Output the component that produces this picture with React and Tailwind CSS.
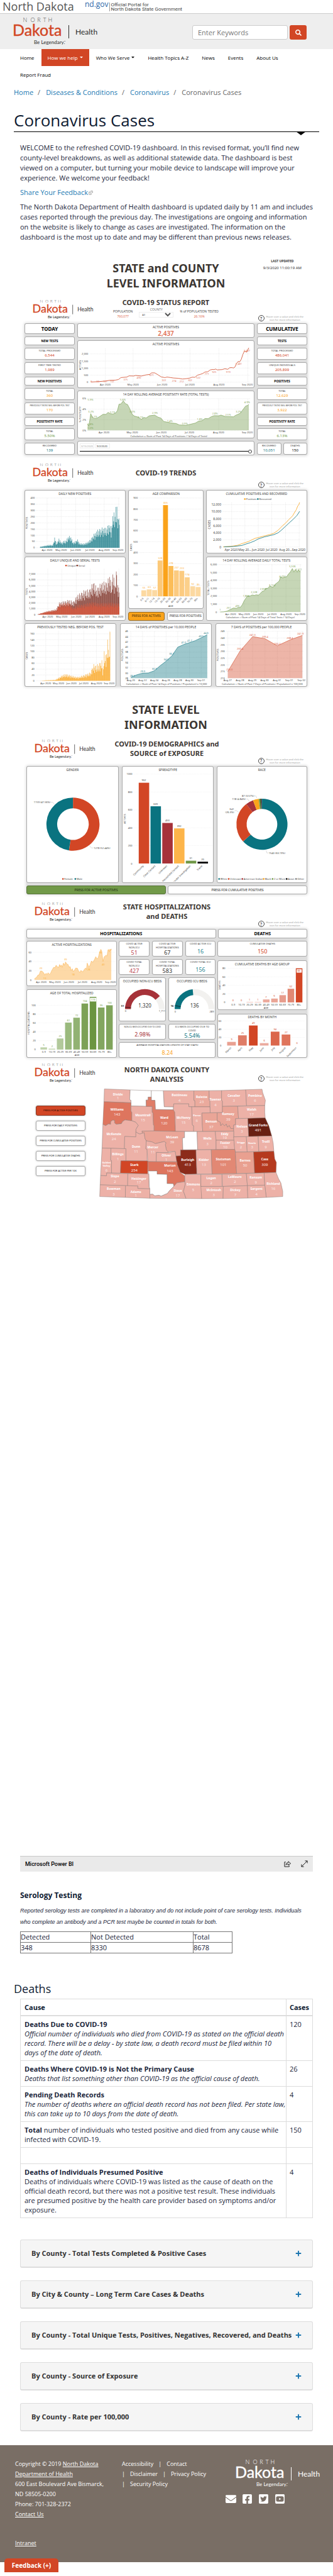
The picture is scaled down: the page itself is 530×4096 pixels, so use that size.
import React from "react";
import { FaEnvelope, FaFacebookSquare, FaTwitterSquare, FaYoutubeSquare, FaSearch, FaPlus } from "react-icons/fa";

/* Charts are plotted on a shared grid; KX and KY turn grid steps into pixels. */
const KX = 0.338;
const KY = 0.2251;
const FONT = "'Noto Sans', sans-serif";

const RED = "#d24625";
const TEAL = "#0a7380";
const GOLD = "#faa31b";
const GREEN = "#719948";
const MAROON = "#a63239";

const OriginContext = React.createContext([0, 0]);

function Chart({ x, y, w, h, title, children, titleY = 25 }) {
  const vw = Math.round(w * KX);
  const vh = Math.round(h * KY);
  return (
    <svg viewBox={`0 0 ${vw} ${vh}`} className="block w-full" role="img" aria-label={title || "chart"}>
      <OriginContext.Provider value={[x, y]}>
        {title && (
          <text x={vw / 2} y={titleY * KY + 2} fontSize="5" textAnchor="middle" fill="#3a3a3a" fontFamily={FONT}>
            {title}
          </text>
        )}
        {children}
      </OriginContext.Provider>
    </svg>
  );
}

function G({ children }) {
  const [x, y] = React.useContext(OriginContext);
  return <g transform={`scale(${KX} ${KY}) translate(${-x} ${-y})`}>{children}</g>;
}

function T({ x, y, s = 4, a = "middle", f = "#444", r = 0, b, children }) {
  const [ox, oy] = React.useContext(OriginContext);
  const px = (x - ox) * KX;
  const py = (y - oy) * KY;
  return (
    <text
      x={px}
      y={py + s * 0.36}
      fontSize={s}
      textAnchor={a}
      fill={f}
      fontWeight={b ? 700 : 400}
      fontFamily={FONT}
      transform={r ? `rotate(${r} ${px} ${py})` : undefined}
    >
      {children}
    </text>
  );
}

function Labels({ items, ...rest }) {
  return items.map(([x, y, t], i) => (
    <T key={i} x={x} y={y} {...rest}>
      {t}
    </T>
  ));
}

function Grid({ x0, x1, y0, y1, ys = [], xs = [], color = "#cfcfcf" }) {
  const p = { stroke: color, strokeWidth: 0.5, strokeDasharray: "0.7 1", vectorEffect: "non-scaling-stroke" };
  return (
    <G>
      {ys.map((y) => (
        <line key={"h" + y} x1={x0} x2={x1} y1={y} y2={y} {...p} />
      ))}
      {xs.map((x) => (
        <line key={"v" + x} x1={x} x2={x} y1={y0} y2={y1} {...p} />
      ))}
    </G>
  );
}

function Line({ pts, color, w = 0.8 }) {
  return (
    <G>
      <polyline points={pts} fill="none" stroke={color} strokeWidth={w} vectorEffect="non-scaling-stroke" />
    </G>
  );
}

function Area({ pts, base, color, opacity = 0.4 }) {
  const list = pts.split(" ");
  const first = list[0].split(",")[0];
  const last = list[list.length - 1].split(",")[0];
  return (
    <G>
      <polygon points={`${first},${base} ${pts} ${last},${base}`} fill={color} opacity={opacity} />
      <polyline points={pts} fill="none" stroke={color} strokeWidth="0.6" vectorEffect="non-scaling-stroke" />
    </G>
  );
}

const NOISE = [0.7, 1, 0.55, 0.85, 0.62, 0.95, 0.5, 0.9, 0.74, 0.6, 1, 0.8, 0.48, 0.92, 0.68, 0.97, 0.58];

function barPath(env, base, step = 2.25, flat = 0) {
  let d = "";
  let k = 0;
  for (let x = env[0][0]; x <= env[env.length - 1][0]; x += step) {
    let i = 0;
    while (i < env.length - 2 && env[i + 1][0] < x) i++;
    const [xa, ha] = env[i];
    const [xb, hb] = env[i + 1];
    const h = (ha + ((hb - ha) * (x - xa)) / (xb - xa)) * (flat + (1 - flat) * NOISE[k % NOISE.length]);
    k++;
    d += `M${x.toFixed(1)} ${base}V${(base - h).toFixed(1)}h1.9V${base}Z`;
  }
  return d;
}

function Bars({ env, base, color, flat, opacity = 0.85 }) {
  return (
    <G>
      <path d={barPath(env, base, 2.25, flat)} fill={color} opacity={opacity} />
    </G>
  );
}

function ring(cx, cy, r0, r1, a0, a1) {
  const p = (r, a) => `${(cx + r * Math.sin(a)).toFixed(2)} ${(cy - r * Math.cos(a)).toFixed(2)}`;
  const big = a1 - a0 > Math.PI ? 1 : 0;
  return `M${p(r1, a0)}A${r1} ${r1} 0 ${big} 1 ${p(r1, a1)}L${p(r0, a1)}A${r0} ${r0} 0 ${big} 0 ${p(r0, a0)}Z`;
}

function Donut({ cx, cy, r0, r1, parts }) {
  const [ox, oy] = React.useContext(OriginContext);
  const total = parts.reduce((s, p) => s + p[0], 0);
  let a = 0;
  return parts.map(([v, c], i) => {
    const from = a;
    a += (v / total) * Math.PI * 2;
    return <path key={i} d={ring((cx - ox) * KX, (cy - oy) * KY, r0, r1, from, a)} fill={c} />;
  });
}

function Dot({ x, y, c }) {
  const [ox, oy] = React.useContext(OriginContext);
  return <circle cx={(x - ox) * KX} cy={(y - oy) * KY} r="1.3" fill={c} />;
}

function Card({ className = "", children }) {
  return (
    <div className={`min-w-0 overflow-hidden rounded-[3px] bg-white shadow-[inset_0_0_0_1px_#a9a9a9] ${className}`}>{children}</div>
  );
}

/* Soft grey halo behind a group of cards */
const HALO = "rounded-[3px] bg-[#dedede] shadow-[0_0_4px_1px_#dedede]";

function Stat({ label, value, color, small }) {
  return (
    <Card className="h-[19px] pt-[2px] text-center">
      <p className={`whitespace-nowrap leading-[6px] text-[#444] ${small ? "text-[3px]" : "text-[4px]"}`}>{label}</p>
      <p className={`text-[6px] leading-[9px] ${color}`}>{value}</p>
    </Card>
  );
}

function Head({ children, big }) {
  return (
    <Card className={`flex items-center justify-center font-bold text-black ${big ? "h-[17px] text-[8px]" : "h-[14px] text-[5px]"}`}>
      {children}
    </Card>
  );
}

function Tile({ label, value, color, tall }) {
  return (
    <Card className="flex h-[25px] flex-col items-center justify-between pt-[2px] pb-[1px] text-center">
      <p className="text-[4px] leading-[6px] text-[#444]">{label}</p>
      <p className={`text-[9px] ${tall ? "leading-[14px]" : "leading-[10px]"} ${color}`}>{value}</p>
    </Card>
  );
}

function Logo({ className, white }) {
  const dark = white ? "#ffffff" : "#2b2b2b";
  return (
    <svg viewBox="0 0 131 44" className={`overflow-visible ${className}`} role="img" aria-label="North Dakota Health, Be Legendary" fontFamily="Lato, sans-serif">
      {["N", "O", "R", "T", "H"].map((c, i) => (
        <text key={i} x={[18, 30, 40, 49, 58][i]} y="7" fontSize="9" textAnchor="middle" fontWeight="300" fill={white ? "#fff" : "#555"}>
          {c}
        </text>
      ))}
      <text x="-2" y="29" fontSize="25" fill={white ? "#fff" : "#d24625"} stroke={white ? "#fff" : "#d24625"} strokeWidth="0.4">
        Dakota
      </text>
      <rect x="87" y="12" width="1" height="21" fill={dark} />
      <text x="98" y="27" fontSize="12" fill={dark}>
        Health
      </text>
      <text x="32" y="42" fontSize="8" fill={dark}>
        Be Legendary.
      </text>
      <text x="80" y="39" fontSize="3" fill={dark}>
        ™
      </text>
    </svg>
  );
}

function Help() {
  return (
    <div className="flex items-center gap-[3px] pr-[6px] pb-[3px]">
      <span className="flex size-[10px] items-center justify-center rounded-full border border-[#444] text-[7px] leading-none text-black">?</span>
      <p className="text-center text-[4px] leading-[5px] text-[#999]">
        Hover over a value and click the
        <br />
        icon for more information
      </p>
    </div>
  );
}

function PageHead({ className, titleClass = "", children }) {
  return (
    <div className={`grid grid-cols-[minmax(0,1fr)_auto_minmax(0,1fr)] ${className}`}>
      <Logo className="ml-[14px] w-[94px]" />
      <div className={`text-center text-[11px] leading-[15px] font-bold text-[#3b3632] ${titleClass}`}>{children}</div>
      <div className="flex items-end justify-end">
        <Help />
      </div>
    </div>
  );
}

const MONTHS = ["Apr 2020", "May 2020", "Jun 2020", "Jul 2020", "Aug 2020", "Sep 2020"];
const months = (xs, y, names = MONTHS) => xs.map((x, i) => [x, y, names[i]]);

function StatusReport() {
  return (
    <div className={`grid grid-cols-[80px_minmax(0,1fr)_80px] gap-1 ${HALO}`}>
      <div className="flex flex-col gap-1">
        <Head big>TODAY</Head>
        <Head>NEW TESTS</Head>
        <Stat label="TOTAL PROCESSED" value="6,544" color="text-[#d24625]" />
        <Stat label="FIRST TIME TESTED" value="1,989" color="text-[#d24625]" />
        <Head>NEW POSITIVES</Head>
        <Stat label="TOTAL" value="360" color="text-[#faa31b]" />
        <Stat small label="PREVIOUSLY TESTED NEG. BEFORE POS. TEST" value="170" color="text-[#faa31b]" />
        <Head>POSITIVITY RATE</Head>
        <Stat label="TOTAL" value="5.50%" color="text-[#719948]" />
        <Stat label="RECOVERED" value="139" color="text-[#0a7380]" />
      </div>
      <div className="flex min-w-0 flex-col gap-1">
        <Card className="h-[23px] pt-[2px] text-center">
          <p className="text-[5px] leading-[8px] text-[#3a3a3a]">ACTIVE POSITIVES</p>
          <p className="text-[10px] leading-[12px] font-semibold text-[#e06c50]">2,437</p>
        </Card>
        <Card>
          <Chart x={368} y={615} w={829} h={334} title="ACTIVE POSITIVES">
            <Grid x0={428} x1={1176} y0={672} y1={909} ys={[711, 761, 810, 860, 909]} xs={[499, 629, 765, 895, 1030, 1165]} />
            <Labels a="end" items={[[419, 711, "2,000"], [419, 761, "1,500"], [419, 810, "1,000"], [419, 860, "500"], [419, 909, "0"]]} />
            <Labels items={months([499, 629, 765, 895, 1030, 1163], 925)} />
            <T x={380} y={789} r={-90}>ACTIVES</T>
            <Line
              color={RED}
              pts="432,908 470,905 500,901 520,896 545,895 560,891 572,877 600,873 610,865 632,866 640,862 668,866 690,858 706,855 715,844 730,844 745,857 760,872 778,877 788,873 805,877 818,880 840,882 860,887 880,884 895,880 905,874 918,875 930,860 942,855 955,848 965,838 978,836 990,823 1000,820 1008,821 1015,817 1022,823 1045,821 1058,815 1072,819 1080,808 1092,807 1098,810 1105,803 1112,780 1120,764 1127,767 1135,748 1142,715 1150,690 1160,699 1170,668"
            />
            <Labels
              f="#e0705a"
              items={[[434, 906, "6"], [464, 906, "30"], [499, 906, "101"], [530, 906, "132"], [594, 891, "375"], [656, 879, "490"], [716, 861, "671"], [773, 897, "322"], [821, 900, "274"], [856, 906, "212"], [895, 897, "302"], [934, 876, "522"], [974, 852, "771"], [1008, 836, "925"], [1074, 836, "919"], [1123, 780, "1,481"], [1161, 687, "2,437"]]}
            />
          </Chart>
        </Card>
        <Card>
          <Chart x={368} y={966} w={829} h={337} title="14 DAY ROLLING AVERAGE POSITIVITY RATE (TOTAL TESTS)">
            <Grid x0={415} x1={1176} y0={1023} y1={1245} ys={[1023, 1097, 1171, 1245]} xs={[493, 625, 761, 893, 1029, 1165]} />
            <Labels a="end" items={[[409, 1023, "6%"], [409, 1097, "4%"], [409, 1171, "2%"], [409, 1245, "0%"]]} />
            <Labels items={months([493, 625, 761, 893, 1029, 1163], 1260)} />
            <T x={380} y={1133} r={-90}>% POSITIVITY</T>
            <Area
              color={GREEN}
              base={1245}
              pts="416,1200 422,1216 431,1128 436,1148 445,1162 460,1160 475,1146 488,1133 502,1133 512,1119 522,1128 535,1131 548,1123 556,1105 563,1062 572,1060 583,1038 593,1058 603,1064 612,1090 625,1133 635,1145 655,1153 667,1168 680,1155 690,1158 705,1143 730,1138 745,1152 760,1160 772,1183 790,1188 805,1193 830,1197 845,1207 875,1210 895,1203 920,1194 935,1181 952,1177 965,1162 980,1163 995,1149 1008,1142 1030,1143 1040,1138 1060,1148 1098,1150 1108,1140 1120,1132 1130,1125 1140,1105 1155,1075 1165,1070 1170,1062"
            />
            <Labels
              f="#7fa558"
              items={[[430, 1032, "5.9%"], [432, 1113, "3.2%"], [448, 1150, "2.2%"], [430, 1203, "0.8%"], [430, 1230, "0.0%"], [533, 1119, "3.1%"], [581, 1031, "5.6%"], [625, 1116, "3.0%"], [664, 1155, "2.1%"], [731, 1125, "2.9%"], [801, 1179, "1.4%"], [871, 1197, "0.9%"], [941, 1165, "1.8%"], [1012, 1128, "2.8%"], [1073, 1136, "2.5%"], [1122, 1112, "3.2%"], [1162, 1047, "4.9%"]]}
            />
            <T x={796} y={1284}>Calculation = (Sum of Past 14 Days of Positives / 14 Days of Tests)</T>
          </Chart>
        </Card>
        <Card className="h-[23px] px-1 pt-[4px]">
          <div className="flex gap-[2px]">
            <input aria-label="From date" defaultValue="3/15/2020" className="h-[8px] w-[23px] border border-[#eee] px-[1px] text-[4px] text-[#aaa]" />
            <input aria-label="To date" defaultValue="9/2/2020" className="h-[8px] w-[23px] border border-[#eee] px-[1px] text-[4px] text-[#333]" />
          </div>
          <input
            type="range"
            aria-label="Date range"
            defaultValue={100}
            className="mt-[1px] block h-[7px] w-full appearance-none bg-[linear-gradient(black,black)] bg-[length:100%_1px] bg-center bg-no-repeat [&::-webkit-slider-thumb]:size-[6px] [&::-webkit-slider-thumb]:appearance-none [&::-webkit-slider-thumb]:rounded-full [&::-webkit-slider-thumb]:border [&::-webkit-slider-thumb]:border-[#444] [&::-webkit-slider-thumb]:bg-white"
          />
        </Card>
      </div>
      <div className="flex flex-col gap-1">
        <Head big>CUMULATIVE</Head>
        <Head>TESTS</Head>
        <Stat label="TOTAL PROCESSED" value="486,041" color="text-[#d24625]" />
        <Stat label="UNIQUE INDIVIDUALS" value="205,899" color="text-[#d24625]" />
        <Head>POSITIVES</Head>
        <Stat label="TOTAL" value="12,629" color="text-[#faa31b]" />
        <Stat small label="PREVIOUSLY TESTED NEG. BEFORE POS. TEST" value="3,922" color="text-[#faa31b]" />
        <Head>POSITIVITY RATE</Head>
        <Stat label="TOTAL" value="6.13%" color="text-[#719948]" />
        <div className="grid grid-cols-2 gap-[3px]">
          <Stat label="RECOVERED" value="10,051" color="text-[#0a7380]" />
          <Stat label="DEATHS" value="150" color="text-black" />
        </div>
      </div>
    </div>
  );
}

const AGE_BARS = [
  [55, "0-5", "#fcd9a1"], [63, "6-11", "#fcd9a1"], [57, "12-14", "#fcd9a1"], [328, "15-19", "#fcc979"], [835, "20-29", GOLD], [278, "30-39", "#fcbd57"],
  [237, "40-49", "#fccb80"], [233, "50-59", "#fccb80"], [174, "60-69", "#fcd08b"], [92, "70-79", "#fcd9a1"], [85, "80+", "#fcd9a1"],
];

function Trends() {
  return (
    <div className={`flex flex-col gap-1 ${HALO}`}>
      <div className="grid grid-cols-[minmax(0,474fr)_minmax(0,357fr)_minmax(0,474fr)] gap-1">
        <div className="flex flex-col gap-[5px]">
          <Card>
            <Chart x={117} y={104} w={474} h={448} title="DAILY NEW POSITIVES">
              <Grid x0={170} x1={564} y0={161} y1={511} ys={[161, 205, 249, 292, 336, 380, 423, 467, 511]} xs={[223, 289, 357, 422, 491, 559]} />
              <Labels a="end" items={[400, 350, 300, 250, 200, 150, 100, 50, 0].map((v, i) => [165, 161 + i * 43.7, v])} />
              <Labels items={months([223, 289, 357, 424, 491, 556], 525)} />
              <T x={128} y={338} r={-90}>POSITIVES</T>
              <Bars color={TEAL} base={511} flat={0.1} env={[[190, 8], [210, 14], [235, 22], [250, 20], [257, 80], [265, 30], [278, 68], [290, 35], [300, 50], [310, 50], [320, 80], [332, 85], [345, 38], [365, 60], [375, 32], [400, 32], [420, 50], [440, 95], [465, 135], [485, 145], [500, 140], [515, 185], [522, 120], [532, 260], [540, 240], [549, 340], [556, 180], [562, 320]]} />
            </Chart>
          </Card>
          <Card>
            <Chart x={117} y={573} w={474} h={448} title="DAILY UNIQUE AND SERIAL TESTS">
              <Dot x={312} y={636} c={RED} />
              <T x={318} y={636} a="start">Unique</T>
              <Dot x={364} y={636} c="#7a2c20" />
              <T x={370} y={636} a="start">Serial</T>
              <Grid x0={176} x1={564} y0={660} y1={981} ys={[696, 737, 778, 818, 859, 900, 940, 981]} xs={[226, 292, 360, 425, 491, 560]} />
              <Labels a="end" items={["7,000", "6,000", "5,000", "4,000", "3,000", "2,000", "1,000", "0"].map((v, i) => [168, 696 + i * 40.7, v])} />
              <Labels items={months([226, 292, 360, 425, 491, 556], 996)} />
              <T x={128} y={820} r={-90}>TESTS</T>
              <Bars color="#7a2c20" base={981} flat={0.2} opacity={0.9} env={[[180, 2], [198, 12], [225, 25], [265, 38], [278, 85], [300, 95], [322, 105], [345, 95], [365, 140], [392, 170], [420, 180], [440, 235], [455, 190], [475, 225], [505, 240], [516, 285], [525, 200], [531, 320], [540, 220], [549, 330], [556, 160], [562, 265]]} />
              <Bars color="#e0583c" base={981} flat={0.2} opacity={0.85} env={[[180, 2], [198, 12], [225, 25], [265, 34], [278, 75], [300, 80], [322, 88], [345, 50], [365, 68], [400, 75], [430, 90], [470, 82], [520, 85], [562, 80]]} />
            </Chart>
          </Card>
        </div>
        <div className="flex flex-col justify-between">
          <Card>
            <Chart x={603} y={104} w={357} h={839} title="AGE COMPARISON">
              <Grid x0={655} x1={952} y0={161} y1={856} ys={[161, 239, 316, 393, 470, 547, 625, 702, 779, 856]} />
              <Labels a="end" items={[900, 800, 700, 600, 500, 400, 300, 200, 100, 0].map((v, i) => [648, 161 + i * 77.2, v])} />
              <T x={616} y={510} r={-90}>CASES</T>
              <G>
                {AGE_BARS.map(([v, , c], i) => (
                  <rect key={i} x={665 + i * 25.6} width="23" y={856 - v * 0.772} height={v * 0.772} fill={c} />
                ))}
              </G>
              <Labels f="#fbb03b" items={AGE_BARS.map(([v], i) => [677 + i * 25.6, 838 - v * 0.772, v])} />
              {AGE_BARS.map(([, n], i) => (
                <T key={n} x={674 + i * 25.6} y={868} a="end" r={-45}>
                  {n}
                </T>
              ))}
              <T x={804} y={924}>AGE</T>
            </Chart>
          </Card>
          <div className="grid grid-cols-2 gap-1">
            <button className="h-[14px] rounded-[3px] border border-[#9a6a1e] bg-[#faa31b] text-[5px] whitespace-nowrap text-[#3a2a10]">PRESS FOR ACTIVES</button>
            <button className="h-[14px] rounded-[3px] border border-[#a9a9a9] bg-white text-[5px] whitespace-nowrap text-[#333]">PRESS FOR POSITIVES</button>
          </div>
        </div>
        <div className="flex flex-col gap-[5px]">
          <Card>
            <Chart x={972} y={104} w={474} h={448} title="CUMULATIVE POSITIVES AND RECOVERED">
              <Dot x={1154} y={168} c={GOLD} />
              <T x={1160} y={168} a="start">Positives</T>
              <Dot x={1215} y={168} c={TEAL} />
              <T x={1221} y={168} a="start">Recovered</T>
              <Grid x0={1050} x1={1416} y0={192} y1={506} ys={[208, 257, 307, 356, 406, 455, 506]} xs={[1092, 1154, 1217, 1280, 1345, 1409]} />
              <Labels s={5} a="end" items={["12,000", "10,000", "8,000", "6,000", "4,000", "2,000", "0"].map((v, i) => [1043, 208 + i * 49.6, v])} />
              <Labels s={5} items={months([1090, 1154, 1217, 1280, 1345, 1407], 524, ["Apr 2020", "May 20…", "Jun 2020", "Jul 2020", "Aug 20…", "Sep 2020"])} />
              <T x={986} y={348} r={-90} s={5}>CASES</T>
              <Line color={GOLD} pts="1052,505 1090,501 1120,494 1140,482 1170,468 1200,446 1220,438 1250,426 1270,419 1290,409 1310,388 1330,357 1345,338 1360,313 1378,287 1385,268 1395,244 1402,218 1407,208 1411,192" />
              <Line color={TEAL} pts="1056,505 1100,502 1140,495 1155,487 1180,475 1200,463 1217,449 1245,435 1270,426 1290,419 1310,406 1325,388 1345,360 1365,332 1380,312 1398,285 1411,255" />
            </Chart>
          </Card>
          <Card>
            <Chart x={972} y={573} w={474} h={448} title="14 DAY ROLLING AVERAGE DAILY TOTAL TESTS">
              <Grid x0={1030} x1={1420} y0={630} y1={963} ys={[630, 685, 741, 796, 852, 907, 963]} xs={[1087, 1151, 1217, 1281, 1347, 1414]} />
              <Labels a="end" items={["6,000", "5,000", "4,000", "3,000", "2,000", "1,000", "0"].map((v, i) => [1023, 630 + i * 55.5, v])} />
              <Labels items={months([1087, 1151, 1217, 1281, 1347, 1412], 978)} />
              <T x={983} y={795} r={-90}>TOTAL TESTS</T>
              <Area color={GREEN} base={963} pts="1038,963 1055,962 1070,957 1085,946 1100,935 1115,937 1122,931 1132,931 1142,912 1150,886 1160,863 1167,850 1178,851 1188,843 1200,846 1206,842 1218,844 1228,830 1236,817 1245,814 1252,797 1262,796 1272,779 1280,787 1288,787 1297,767 1305,758 1315,745 1322,715 1332,724 1340,717 1350,715 1358,697 1367,682 1377,657 1384,681 1391,664 1400,682 1406,665 1411,680 1415,672" />
              <Labels f="#7fa558" items={[[1038, 948, "1"], [1078, 933, "251"], [1119, 921, "495"], [1160, 850, "1,804"], [1197, 825, "2,228"], [1240, 801, "2,656"], [1282, 775, "3,154"], [1330, 711, "4,292"], [1377, 642, "5,506"], [1407, 666, "5,111"]]} />
              <T x={1226} y={1002}>Calculation = (Sum of Past 14 Days of Total Tests / 14 Days)</T>
            </Chart>
          </Card>
        </div>
      </div>
      <div className="grid grid-cols-3 gap-[6px]">
        <Card>
          <Chart x={117} y={1038} w={431} h={448} title="PREVIOUSLY TESTED NEG. BEFORE POS. TEST">
            <Grid x0={172} x1={522} y0={1093} y1={1445} ys={[1113, 1154, 1196, 1237, 1279, 1320, 1362, 1403, 1445]} xs={[217, 277, 337, 396, 456, 518]} />
            <Labels a="end" items={[160, 140, 120, 100, 80, 60, 40, 20, 0].map((v, i) => [164, 1113 + i * 41.5, v])} />
            <Labels items={months([217, 277, 338, 396, 456, 516], 1461)} />
            <T x={128} y={1268} r={-90}>CASES</T>
            <Bars color={GOLD} base={1445} opacity={0.9} env={[[190, 1], [220, 5], [262, 8], [285, 32], [300, 45], [315, 50], [335, 38], [370, 28], [400, 45], [425, 60], [440, 120], [455, 110], [468, 130], [480, 150], [486, 60], [492, 230], [500, 170], [509, 340], [513, 200], [519, 360]]} />
          </Chart>
        </Card>
        <Card>
          <Chart x={566} y={1038} w={431} h={448} title="14 DAYS of POSITIVES per 10,000 PEOPLE">
            <Grid x0={612} x1={980} y0={1095} y1={1426} ys={[1095, 1132, 1169, 1205, 1242, 1279, 1316, 1353, 1389, 1426]} xs={[617, 672, 728, 783, 838, 893, 948]} />
            <Labels a="end" items={[46, 44, 42, 40, 38, 36, 34, 32, 30, 28].map((v, i) => [604, 1095 + i * 36.8, v])} />
            <Labels items={["Aug 20", "Aug 22", "Aug 24", "Aug 26", "Aug 28", "Aug 30", "Sep 01"].map((v, i) => [617 + i * 55.2, 1441, v])} />
            <T x={577} y={1262} r={-90}>POSITIVES</T>
            <Area color={TEAL} base={1426} pts="617,1421 643,1403 672,1391 700,1389 728,1373 755,1338 783,1306 810,1269 838,1207 865,1189 893,1175 920,1161 948,1141 977,1119" />
            <Labels f="#2f8591" items={[[624, 1407, "28.3"], [673, 1376, "29.9"], [728, 1359, "30.9"], [783, 1293, "34.5"], [809, 1254, "36.7"], [866, 1173, "41.0"], [894, 1161, "41.7"], [948, 1128, "43.5"], [971, 1107, "44.6"]]} />
            <T x={785} y={1467}>Calculation = (Sum of Past 14 Days of Positives / Population) x 10,000</T>
          </Chart>
        </Card>
        <Card>
          <Chart x={1016} y={1038} w={431} h={448} title="7 DAYS of POSITIVES per 100,000 PEOPLE">
            <Grid x0={1066} x1={1430} y0={1095} y1={1426} ys={[1095, 1142, 1190, 1237, 1284, 1332, 1379, 1426]} xs={[1074, 1132, 1191, 1249, 1307, 1366, 1425]} />
            <Labels a="end" items={[245, 240, 235, 230, 225, 220, 215, 210].map((v, i) => [1060, 1095 + i * 47.3, v])} />
            <Labels items={["Aug 27", "Aug 28", "Aug 29", "Aug 30", "Aug 31", "Sep 01", "Sep 02"].map((v, i) => [1073 + i * 58, 1441, v])} />
            <T x={1027} y={1262} r={-90}>POSITIVES</T>
            <Area color={RED} base={1426} pts="1074,1379 1132,1233 1191,1132 1249,1147 1307,1197 1366,1156 1425,1124" />
            <Labels f="#dd5a3e" items={[[1082, 1365, "215.0"], [1132, 1217, "230.4"], [1190, 1119, "241.0"], [1249, 1134, "239.4"], [1307, 1182, "234.2"], [1366, 1143, "238.4"], [1416, 1110, "241.9"]]} />
            <T x={1236} y={1467}>Calculation = (Sum of Past 7 Days of Positives / Population) x 100,000</T>
          </Chart>
        </Card>
      </div>
    </div>
  );
}

const SPREAD = [
  [902, "Community", RED], [639, "Close Contact", TEAL], [453, "Unknown", MAROON], [392, "Household Contact", "#fdb54a"], [31, "Under Investigation", GREEN], [20, "Travel", "#000"],
];

function Demographics() {
  return (
    <div className={`flex flex-col gap-1 ${HALO}`}>
      <div className="grid grid-cols-[minmax(0,433fr)_minmax(0,432fr)_minmax(0,423fr)] items-stretch gap-[5px]">
        <Card>
          <Chart x={126} y={486} w={433} h={819} title="GENDER">
            <Donut cx={344} cy={894} r0={25} r1={42} parts={[[1278, RED], [1159, TEAL]]} />
            <Line color="#bbb" w={0.5} pts="240,740 248,740 257,753" />
            <Line color="#bbb" w={0.5} pts="422,1045 430,1061 439,1061" />
            <T x={238} y={741} a="end">1159 (47.56%)</T>
            <T x={441} y={1062} a="start">1278 (52.44%)</T>
            <Dot x={297} y={1279} c={RED} />
            <T x={303} y={1280} a="start">Female</T>
            <Dot x={355} y={1279} c={TEAL} />
            <T x={361} y={1280} a="start">Male</T>
          </Chart>
        </Card>
        <Card>
          <Chart x={576} y={486} w={432} h={819} title="SPREADTYPE">
            <Grid x0={636} x1={1002} y0={0} y1={0} ys={[543, 669, 795, 921, 1046]} color="#e3e3e3" />
            <Labels a="end" items={[1000, 800, 600, 400, 200, 0].map((v, i) => [625, 543 + i * 125.9, v])} />
            <T x={588} y={858} r={-90}>ACTIVES</T>
            <G>
              {SPREAD.map(([v, , c], i) => (
                <rect key={i} x={655 + i * 55.2} width="49" y={1172 - v * 0.63} height={v * 0.63} fill={c} />
              ))}
            </G>
            <Labels items={SPREAD.map(([v], i) => [679 + i * 55.2, 1156 - v * 0.63, v])} />
            {SPREAD.map(([, n], i) => (
              <T key={n} x={676 + i * 55.2} y={1186} a="end" r={-45}>
                {n}
              </T>
            ))}
          </Chart>
        </Card>
        <Card>
          <Chart x={1024} y={486} w={423} h={825} title="RACE">
            <Donut cx={1236} cy={896} r0={24.3} r1={40.5} parts={[[1540, TEAL], [641, RED], [118, MAROON], [87, GOLD], [30, GREEN], [16, "#000"], [5, "#888"]]} />
            <Line color="#bbb" w={0.5} pts="1256,1080 1259,1098 1266,1098" />
            <Line color="#bbb" w={0.5} pts="1108,800 1117,800 1127,812" />
            <Line color="#bbb" w={0.5} pts="1162,719 1170,719 1176,735" />
            <Line color="#bbb" w={0.5} pts="1201,697 1208,697 1212,712" />
            <T x={1199} y={697} a="end">87 (3.57%)</T>
            <T x={1159} y={720} a="end">118 (4.84%)</T>
            <T x={1105} y={789} a="end">641</T>
            <T x={1105} y={810} a="end">(26.3%)</T>
            <T x={1268} y={1098} a="start">1540 (63.19%)</T>
            {[[1035, "White", TEAL], [1080, "Unknown", RED], [1144, "American Indian", MAROON], [1244, "Black", GOLD], [1286, "2 or More", GREEN], [1352, "Asian", "#000"], [1396, "Other", "#777"]].map(([x, n, c]) => (
              <g key={n}>
                <Dot x={x} y={1281} c={c} />
                <T x={x + 6} y={1281} a="start">
                  {n}
                </T>
              </g>
            ))}
          </Chart>
        </Card>
      </div>
      <div className="grid grid-cols-2 gap-[3px]">
        <button className="h-[14px] rounded-[3px] border border-[#56733a] bg-[#719948] text-[5px] text-[#1c2a10]">PRESS FOR ACTIVE POSITIVES</button>
        <button className="h-[14px] rounded-[3px] border border-[#a9a9a9] bg-white text-[5px] text-[#222]">PRESS FOR CUMULATIVE POSITIVES</button>
      </div>
    </div>
  );
}

const AGES = ["0-9", "10-19", "20-29", "30-39", "40-49", "50-59", "60-69", "70-79", "80+"];
const HOSP = [[5, "#c0d3ac"], [2, "#c0d3ac"], [25, "#b2c99b"], [61, "#9aba7d"], [72, "#92b273"], [104, "#7da156"], [119, "#6b9540"], [95, "#83a65f"], [100, "#80a45b"]];
const DEATHS = [[0, "#edb0a5"], [0, "#edb0a5"], [1, "#edb0a5"], [1, "#edb0a5"], [7, "#ecaa9d"], [9, "#eaa596"], [17, "#e79c8c"], [32, "#e18874"], [80, RED]];
const BY_MONTH = [[9, "March", "#e9a091"], [25, "April", "#df7c66"], [49, "May", RED], [6, "June", "#ebab9e"], [34, "July", "#db674c"], [27, "August", "#df745b"], [0, "September", RED]];

function Gauge({ title, value, max, mark, color, shown }) {
  const cx = 123 * KX;
  const cy = 224 * KY;
  const a = (v) => -Math.PI / 2 + (v / max) * Math.PI;
  const t = a(mark);
  return (
    <Chart x={0} y={0} w={222} h={309} title={title}>
      <path d={ring(cx, cy, 22.3, 31.6, -Math.PI / 2, Math.PI / 2)} fill="#f2f1ef" />
      <path d={ring(cx, cy, 22.3, 31.6, -Math.PI / 2, a(value))} fill={color} />
      <line x1={cx + 22.3 * Math.sin(t)} y1={cy - 22.3 * Math.cos(t)} x2={cx + 31.6 * Math.sin(t)} y2={cy - 31.6 * Math.cos(t)} stroke="#111" strokeWidth="0.7" />
      <T x={123} y={199} s={8} f="#333">{shown}</T>
      <T x={18} y={203} f="#222" b>{mark}</T>
      <T x={32} y={240}>0</T>
      <T x={204} y={240}>{max.toLocaleString("en-US")}</T>
    </Chart>
  );
}

function Hospitals() {
  return (
    <div className={`flex flex-col gap-1 ${HALO}`}>
      <div className="grid grid-cols-[minmax(0,894fr)_minmax(0,422fr)] gap-[3px] text-[7px] font-bold text-black">
        <Card className="flex h-[15px] items-center justify-center">HOSPITALIZATIONS</Card>
        <Card className="flex h-[15px] items-center justify-center">DEATHS</Card>
      </div>
      <div className="grid grid-cols-[minmax(0,427fr)_minmax(0,456fr)_minmax(0,422fr)] gap-[3px]">
        <div className="flex flex-col justify-between">
          <Card>
            <Chart x={126} y={273} w={427} h={315} title="ACTIVE HOSPITALIZATIONS">
              <Grid x0={157} x1={545} y0={0} y1={0} ys={[354, 419, 484]} color="#e3e3e3" />
              <Labels a="end" items={[[150, 354, "60"], [150, 418, "40"], [150, 483, "20"], [150, 549, "0"]]} />
              <Labels items={months([196, 260, 326, 390, 456, 521], 564)} />
              <Area color="#fbb450" opacity={0.5} base={549} pts="164,540 174,530 180,515 186,512 192,486 200,487 208,500 212,514 218,502 224,510 228,498 234,510 240,500 246,480 254,460 260,462 266,445 272,457 278,460 282,440 286,455 290,443 294,460 300,430 305,445 310,422 316,436 322,440 326,458 332,455 336,482 342,470 346,490 352,480 358,465 366,467 372,490 378,495 382,482 392,492 398,475 404,465 408,475 412,430 420,460 426,440 432,415 438,425 446,405 452,385 458,400 464,390 470,355 476,333 480,345 486,418 492,385 500,375 505,380 510,335 516,350 520,335 525,330" />
              <Labels f="#fbb03b" items={[[194, 468, "20"], [212, 537, "10"], [310, 405, "39"], [346, 510, "18"], [419, 477, "28"], [475, 354, "66"], [487, 438, "40"], [520, 339, "67"]]} />
            </Chart>
          </Card>
          <Card>
            <Chart x={126} y={604} w={427} h={484} title="AGE OF TOTAL HOSPITALIZED">
              <Grid x0={180} x1={545} y0={0} y1={0} ys={[717, 779, 841, 904, 966]} color="#e3e3e3" />
              <Labels a="end" items={[100, 80, 60, 40, 20, 0].map((v, i) => [170, 717 + i * 62.4, v])} />
              <T x={138} y={843} r={-90}>HOSPITALIZATIONS</T>
              <G>
                {HOSP.map(([v, c], i) => (
                  <rect key={i} x={192 + i * 38.6} width="31" y={1029 - v * 3.12} height={v * 3.12} fill={c} />
                ))}
                <rect x="425" y="664" width="29" height="26" fill="#fff" />
              </G>
              <Labels f="#719948" items={HOSP.map(([v], i) => [208 + i * 38.6, i === 6 ? 677 : 1012 - v * 3.12, v])} />
              <Labels items={AGES.map((n, i) => [208 + i * 38.6, 1044, n])} />
              <T x={364} y={1067}>AGE</T>
            </Chart>
          </Card>
        </div>
        <div className="flex flex-col gap-1">
          <div className="grid grid-cols-3 gap-1">
            <Tile label={<>COVID ACTIVE<br />NON-ICU</>} value="51" color="text-[#b9444f]" />
            <Tile label={<>COVID ACTIVE<br />HOSPITALIZATIONS</>} value="67" color="text-[#333]" />
            <Tile tall label="COVID ACTIVE ICU" value="16" color="text-[#2d8793]" />
            <Tile label={<>COVID TOTAL<br />NON-ICU</>} value="427" color="text-[#b9444f]" />
            <Tile label={<>COVID TOTAL<br />HOSPITALIZATIONS</>} value="583" color="text-[#333]" />
            <Tile tall label="COVID TOTAL ICU" value="156" color="text-[#2d8793]" />
          </div>
          <div className="grid grid-cols-2 gap-1">
            <Card>
              <Gauge title="OCCUPIED NON-ICU BEDS" value={1320} max={1711} mark={51} color={MAROON} shown="1,320" />
            </Card>
            <Card>
              <Gauge title="OCCUPIED ICU BEDS" value={136} max={289} mark={16} color={TEAL} shown="136" />
            </Card>
            <Tile tall label={<span className="whitespace-nowrap text-[3px]">NON-ICU BEDS OCCUPIED DUE TO COVID</span>} value="2.98%" color="text-[#a63239]" />
            <Tile label={<>ICU BEDS OCCUPIED DUE TO<br />COVID</>} value="5.54%" color="text-[#0a7380]" />
          </div>
          <Tile tall label="AVERAGE HOSPITALIZATION LENGTH OF STAY (DAYS)" value="8.24" color="text-[#faa31b]" />
        </div>
        <div className="flex flex-col justify-between">
          <Tile tall label="CUMULATIVE DEATHS" value="150" color="text-[#d24625]" />
          <Card>
            <Chart x={1030} y={397} w={422} h={357} title="CUMULATIVE DEATHS BY AGE GROUP">
              <Grid x0={1080} x1={1445} y0={0} y1={0} ys={[454, 514, 574, 634]} color="#e3e3e3" />
              <Labels a="end" items={[80, 60, 40, 20, 0].map((v, i) => [1067, 454 + i * 60, v])} />
              <T x={1041} y={574} r={-90}>DEATHS</T>
              <G>
                {DEATHS.map(([v, c], i) => (
                  <rect key={i} x={1090 + i * 38.8} width="31" y={695 - v * 3.02} height={v * 3.02} fill={c} />
                ))}
                <rect x="1404" y="460" width="24" height="24" fill="#fff" />
              </G>
              <Labels f="#d24625" items={["0", "0", "1", "1", "7", "9", "17", "32", "83"].map((v, i) => [1104 + i * 38.9, i === 8 ? 473 : 678 - DEATHS[i][0] * 3.02, v])} />
              <Labels items={AGES.map((n, i) => [1105 + i * 38.8, 711, n])} />
              <T x={1260} y={735}>AGE</T>
            </Chart>
          </Card>
          <Card>
            <Chart x={1030} y={772} w={422} h={316} title="DEATHS BY MONTH" titleY={22}>
              <Grid x0={1060} x1={1445} y0={0} y1={0} ys={[822, 881, 939]} color="#e3e3e3" />
              <Labels a="end" items={[[1049, 822, "60"], [1049, 881, "40"], [1049, 939, "20"], [1049, 997, "0"]]} />
              <G>
                {BY_MONTH.map(([v, , c], i) => (
                  <rect key={i} x={1076 + i * 51.5} width="41" y={997 - v * 2.9} height={v * 2.9} fill={c} />
                ))}
              </G>
              <Labels f="#d24625" items={BY_MONTH.map(([v], i) => [1097 + i * 51.4, 981 - v * 2.9, v])} />
              {BY_MONTH.map(([, n], i) => (
                <T key={n} x={1094 + i * 51.3} y={1010} a="end" r={-45}>
                  {n}
                </T>
              ))}
            </Chart>
          </Card>
        </div>
      </div>
    </div>
  );
}

const PALE = "#edb1a7";
const COUNTIES = [
  ["492,264 614,271 612,340 618,345 618,362 490,355", PALE, "Divide", 1, 556, 302, 329],
  ["614,271 714,276 714,322 699,322 699,343 689,343 690,388 618,385 618,345 612,340", "#fff"],
  ["714,276 771,277 775,390 818,391 818,412 733,410 731,345 714,345", "#fff"],
  ["771,277 915,277 915,345 920,348 920,391 891,390 891,370 820,370 819,391 775,390", PALE, "Bottineau", 4, 847, 308, 344],
  ["915,277 987,276 988,345 991,350 991,391 920,391 920,348 915,345", "#ebaa9d", "Rolette", 23, 952, 320, 356],
  ["987,276 1046,275 1046,345 1050,350 1050,432 992,433 991,350 988,345", PALE, "Towner", 4, 1017, 340, 377],
  ["1046,275 1160,270 1164,383 1050,388 1050,350 1046,345", PALE, "Cavalier", 3, 1104, 311, 347],
  ["1160,270 1237,266 1240,290 1253,345 1250,382 1164,383", PALE, "Pembina", 6, 1204, 311, 347],
  ["490,355 618,362 618,420 622,430 622,490 590,484 578,495 573,510 548,515 540,505 540,488 533,485 522,495 522,515 512,512 498,525 485,515", "#de755e", "Williams", 143, 552, 410, 446],
  ["618,385 718,388 718,430 722,433 724,520 727,523 727,562 670,563 672,578 660,584 650,578 641,568 641,550 652,522 640,500 622,490 622,430 618,420", PALE, "Mountrail", 15, 674, 449, 485],
  ["699,322 714,322 714,345 731,345 733,410 821,412 825,430 828,565 727,562 727,523 724,520 722,433 718,430 718,388 690,388 689,343 699,343", "#e07d68", "Ward", 120, 775, 470, 506],
  ["820,370 891,370 891,390 905,391 908,520 914,525 914,566 828,565 825,430 818,412", PALE, "McHenry", 15, 866, 467, 503],
  ["905,391 991,391 992,433 953,435 955,520 957,566 914,566 914,525 908,520", PALE, "Pierce", 6, 929, 450, 488],
  ["953,435 1025,433 1025,488 1040,500 1042,525 1050,510 1060,525 1068,512 1074,535 1082,522 1090,545 1103,545 1103,563 957,566 955,520", "#eaa597", "Benson", 37, 997, 497, 533],
  ["1050,388 1122,387 1126,473 1112,475 1112,518 1103,520 1103,545 1090,545 1082,522 1074,535 1068,512 1060,525 1050,510 1042,525 1040,500 1025,488 1025,433 1050,432", "#eaa597", "Ramsey", 39, 1077, 443, 479],
  ["1122,387 1250,382 1250,430 1252,469 1170,473 1126,473", PALE, "Walsh", 17, 1188, 410, 446],
  ["1112,475 1170,473 1174,603 1103,604 1103,520 1112,518", PALE, "Nelson", 3, 1142, 530, 566],
  ["1170,473 1252,469 1270,530 1283,598 1174,603", "#692013", "Grand Forks", 491, 1219, 521, 557],
  ["485,515 498,525 512,512 522,515 522,495 533,485 540,488 540,505 548,515 573,510 578,495 590,484 622,490 640,500 652,522 641,550 641,604 588,601 587,688 481,683", PALE, "McKenzie", 24, 537, 582, 620],
  ["588,601 641,604 641,568 650,578 660,584 680,573 684,615 690,632 688,688 694,692 694,775 594,773 594,688 587,688", PALE, "Dunn", 11, 642, 671, 707],
  ["670,563 727,562 871,566 871,610 861,612 863,696 852,697 852,738 830,740 826,706 793,710 785,697 780,660 783,645 775,637 733,652 718,640 690,632 684,615 680,573 672,578", "#eaa597", "McLean", 39, 812, 605, 641],
  ["871,566 930,566 933,695 863,696 861,612 871,610", "#fff"],
  ["930,566 1016,566 1020,628 1020,694 933,695", PALE, "Wells", 3, 979, 617, 653],
  ["1016,566 1103,563 1103,604 1105,628 1020,628", PALE, "Eddy", 19, 1061, 585, 611],
  ["1020,628 1105,628 1108,692 1020,694", PALE, "Foster", 10, 1063, 648, 674],
  ["1103,604 1163,602 1167,710 1111,712 1108,692", PALE, "Griggs", 2, 1137, 645, 674],
  ["1163,602 1219,600 1222,707 1167,710", PALE, "Steele", 3, 1190, 647, 677],
  ["1219,600 1283,598 1290,650 1293,706 1222,707", PALE, "Traill", 9, 1255, 638, 674],
  ["690,632 718,640 733,652 775,637 783,645 780,660 785,697 793,710 795,716 738,714 737,780 697,779 694,692 688,688", PALE, "Mercer", 11, 721, 677, 713],
  ["738,714 795,716 826,706 830,740 836,780 737,780", PALE, "Oliver", 1, 785, 735, 765],
  ["852,697 925,696 929,867 874,869 850,855 836,800 830,740 852,738", "#8c2b1a", "Burleigh", 413, 886, 767, 803],
  ["925,696 997,695 1001,867 929,867", PALE, "Kidder", 13, 962, 767, 803],
  ["997,695 1108,692 1111,712 1117,864 1001,867", "#e28874", "Stutsman", 101, 1054, 764, 800],
  ["1111,712 1197,710 1202,860 1117,864", "#e9a090", "Barnes", 50, 1157, 770, 806],
  ["1197,710 1293,706 1297,760 1305,785 1303,856 1202,860", "#b53a1f", "Cass", 309, 1250, 764, 800],
  ["481,683 523,685 522,770 526,772 526,860 503,860 502,880 474,878", PALE, "", 6, 502, 0, 839],
  ["523,685 594,688 594,773 570,774 568,861 526,860 526,772 522,770", PALE, "Billings", 1, 556, 725, 761],
  ["570,774 697,775 697,866 568,861", "#d24625", "Stark", 254, 634, 803, 839],
  ["697,779 836,781 836,800 850,855 872,880 872,922 835,930 820,955 818,936 788,935 788,870 741,868 741,846 699,846", "#de755e", "Morton", 143, 802, 809, 845],
  ["699,846 741,846 741,868 788,870 788,935 818,936 820,955 800,985 790,1005 760,1024 750,1018 730,1022 720,1010 707,1012 702,866", "#fff"],
  ["474,878 502,880 503,860 603,864 602,950 472,944", PALE, "Slope", 2, 542, 884, 920],
  ["603,864 702,867 703,960 707,972 650,970 650,952 602,950", PALE, "Hettinger", 17, 655, 899, 926],
  ["472,944 592,950 591,1033 470,1027", PALE, "Bowman", 3, 536, 974, 1010],
  ["592,950 650,952 650,970 707,973 707,1039 591,1033", PALE, "Adams", 1, 641, 992, 1018],
  ["707,1012 720,1010 730,1022 750,1018 760,1024 790,1005 800,985 820,955 835,930 872,922 874,940 866,990 878,1041 707,1039", PALE, "Sioux", 17, 839, 983, 1019],
  ["874,869 948,870 948,955 952,955 952,1042 878,1041 866,990 874,940 872,880", PALE, "Emmons", 5, 912, 941, 977],
  ["948,870 1048,869 1048,955 948,955", PALE, "Logan", 2, 997, 896, 932],
  ["1048,869 1163,864 1168,950 1050,955", PALE, "LaMoure", 2, 1109, 887, 923],
  ["1163,864 1247,860 1250,946 1168,950", PALE, "Ransom", 9, 1208, 890, 926],
  ["1247,860 1303,856 1315,900 1326,930 1335,990 1335,1027 1257,1033 1250,946", PALE, "Richland", 16, 1290, 935, 971],
  ["948,955 1054,955 1053,1041 952,1042", PALE, "McIntosh", 3, 1009, 980, 1016],
  ["1054,955 1168,950 1170,1038 1053,1041", PALE, "Dickey", 7, 1111, 980, 1016],
  ["1168,950 1250,946 1257,1033 1170,1038", PALE, "Sargent", 4, 1211, 974, 1010],
];

function CountyMap() {
  return (
    <Chart x={468} y={262} w={870} h={784}>
      <G>
        {COUNTIES.map(([pts, fill], i) => (
          <polygon key={i} points={pts} fill={fill} stroke="#8a7a76" strokeWidth="0.5" vectorEffect="non-scaling-stroke" />
        ))}
      </G>
      {COUNTIES.map(([, , name, n, x, y1, y2], i) =>
        n ? (
          <g key={i}>
            {name && <T x={x} y={y1} s={name === "Griggs" || name === "Steele" || name === "Pierce" ? 4 : 5} f="#fff" b>{name}</T>}
            <T x={x} y={y2} s={6} f="#fbe9e6">{n}</T>
          </g>
        ) : null
      )}
      <T x={502} y={786} f="#fff" b>Golden</T>
      <T x={502} y={810} f="#fff" b>Valley</T>
    </Chart>
  );
}

const ACCORDIONS = [
  "By County - Total Tests Completed & Positive Cases",
  "By City & County – Long Term Care Cases & Deaths",
  "By County - Total Unique Tests, Positives, Negatives, Recovered, and Deaths",
  "By County - Source of Exposure",
  "By County - Rate per 100,000",
];

const CAUSES = [
  [<><b>Deaths Due to COVID-19</b><br /><i>Official number of individuals who died from COVID-19 as stated on the official death record. There will be a delay - by state law, a death record must be filed within 10 days of the date of death.</i></>, "120"],
  [<><b>Deaths Where COVID-19 is Not the Primary Cause</b><br /><i>Deaths that list something other than COVID-19 as the official cause of death.</i></>, "26"],
  [<><b>Pending Death Records</b><br /><i>The number of deaths where an official death record has not been filed. Per state law, this can take up to 10 days from the date of death.</i></>, "4"],
  [<><b>Total</b> number of individuals who tested positive and died from any cause while infected with COVID-19.</>, "150"],
  ["\u00a0", ""],
  [<><b>Deaths of Individuals Presumed Positive</b><br />Deaths of individuals where COVID-19 was listed as the cause of death on the official death record, but there was not a positive test result. These individuals are presumed positive by the health care provider based on symptoms and/or exposure.</>, "4"],
];

function NavItem({ active, caret, children }) {
  return (
    <li>
      <a href="#" className={`flex h-[27px] items-center gap-[3px] px-[10px] text-[8px] ${active ? "bg-[#d24625] text-white" : "text-black"}`}>
        {children}
        {caret && (
          <svg viewBox="0 0 6 3" className="w-[5px]" aria-hidden="true">
            <path d="M0 0h6L3 3z" fill="currentColor" />
          </svg>
        )}
      </a>
    </li>
  );
}

export default function App() {
  return (
    <div className="bg-white font-['Open_Sans',sans-serif] text-[11px] leading-[16px] text-[#1b263b]">
      <div className="flex h-[22px] border-b border-[#ccc] pl-[4px]">
        <span className="w-[131px] text-[18px] leading-[21px] text-[#555]">North Dakota</span>
        <span className="text-[12px] leading-[13px] text-[#2b66a8]">nd.gov</span>
        <p className="mt-[4px] ml-[1px] h-[14px] border-l border-[#999] pl-[2px] font-[Roboto,sans-serif] text-[8px] leading-[7px] text-[#444]">
          Official Portal for
          <br />
          North Dakota State Government
        </p>
      </div>

      <header className="flex h-[56px] items-start justify-between bg-[#eee] pr-[42px] pl-[22px]">
        <a href="#" className="mt-[6px]">
          <Logo className="w-[131px]" />
        </a>
        <form className="mt-[18px] flex gap-[3px]">
          <input aria-label="Enter Keywords" placeholder="Enter Keywords" className="h-[23px] w-[152px] rounded-[3px] border border-[#ccc] bg-white px-2 text-[11px] placeholder:text-[#777]" />
          <button type="button" aria-label="Search" className="flex h-[23px] w-[27px] items-center justify-center rounded-[3px] bg-[#d24625] text-white">
            <FaSearch size={10} />
          </button>
        </form>
      </header>

      <nav className="px-[22px]">
        <ul className="flex flex-wrap gap-x-px">
          <NavItem>Home</NavItem>
          <NavItem active caret>How we help</NavItem>
          <NavItem caret>Who We Serve</NavItem>
          <NavItem>Health Topics A-Z</NavItem>
          <NavItem>News</NavItem>
          <NavItem>Events</NavItem>
          <NavItem>About Us</NavItem>
          <NavItem>Report Fraud</NavItem>
        </ul>
      </nav>

      <main>
        <div className="px-[22px]">
          <ol className="mt-[7px] flex gap-[7px] text-[#666]">
            <li><a href="#" className="text-[#1b7ab3]">Home</a></li>
            <li className="pr-[2px]">/</li>
            <li><a href="#" className="text-[#1b7ab3]">Diseases &amp; Conditions</a></li>
            <li className="pr-[2px]">/</li>
            <li><a href="#" className="text-[#1b7ab3]">Coronavirus</a></li>
            <li className="pr-[2px]">/</li>
            <li>Coronavirus Cases</li>
          </ol>
          <h1 className="mt-[18px] text-[26px] leading-[36px] text-[#0f1c33]">Coronavirus Cases</h1>
          <div className="relative border-b border-black">
            <svg viewBox="0 0 16 6" className="absolute top-0 right-[21px] w-4" aria-hidden="true">
              <path d="M0 0h16L8 6z" />
            </svg>
          </div>
        </div>

        <div className="mt-[17px] flex flex-col gap-[7px] pr-[29px] pl-[32px]">
          <p>
            WELCOME to the refreshed COVID-19 dashboard. In this revised format, you’ll find new county-level breakdowns, as well as additional statewide data. The dashboard is best viewed on a computer, but turning your mobile device to landscape will improve your experience. We welcome your feedback!
          </p>
          <p>
            <a href="#" className="inline-flex items-center gap-[1px] text-[#1b7ab3]">
              Share Your Feedback
              <svg viewBox="0 0 10 10" className="w-[7px]" fill="none" stroke="#888" aria-hidden="true">
                <path d="M4 3H1v6h5V7M5 1h4v4L8 4 5 7 3 5l3-3z" />
              </svg>
            </a>
          </p>
          <p>
            The North Dakota Department of Health dashboard is updated daily by 11 am and includes cases reported through the previous day. The investigations are ongoing and information on the website is likely to change as cases are investigated. The information on the dashboard is the most up to date and may be different than previous news releases.
          </p>
        </div>

        <section className="mt-[27px] pr-[41px] pl-[39px] font-['Noto_Sans',sans-serif] leading-none" aria-label="Dashboard">
          <div className="grid grid-cols-[minmax(0,1fr)_auto_minmax(0,1fr)]">
            <span />
            <h2 className="pt-[2px] text-center text-[18px] leading-[24px] font-bold text-[#3b3632]">
              STATE and COUNTY
              <br />
              LEVEL INFORMATION
            </h2>
            <div className="justify-self-end pr-[9px] text-center text-[#333]">
              <p className="text-[5px] leading-[7px] font-bold">LAST UPDATED</p>
              <p className="text-[6px] leading-[14px]">9/3/2020 11:00:19 AM</p>
            </div>
          </div>
          <PageHead className="mt-[14px] h-[38px]">
            <p className="leading-[10px]">COVID-19 STATUS REPORT</p>
            <div className="mt-[4px] flex justify-center gap-[10px] text-[5px] leading-[8px] font-normal text-[#444]">
              <p className="mt-[1px]">
                POPULATION
                <br />
                <span className="text-[#e06c50]">760,077</span>
              </p>
              <label className="-mt-[2px] flex flex-col text-[#777]">
                COUNTY
                <select className="h-[9px] w-[55px] border border-[#eee] bg-white text-[4px] text-[#555]">
                  <option>All</option>
                </select>
              </label>
              <p className="mt-[1px]">
                % of POPULATION TESTED
                <br />
                <span className="text-[#e06c50]">26.16%</span>
              </p>
            </div>
          </PageHead>
          <StatusReport />
          <PageHead className="mt-[12px] h-[43px]" titleClass="pt-[8px]">COVID-19 TRENDS</PageHead>
          <Trends />
          <h2 className="mt-[24px] text-center text-[18px] leading-[24px] font-bold text-[#3b3632]">
            STATE LEVEL
            <br />
            INFORMATION
          </h2>
          <div className="pl-[3px]">
            <PageHead className="mt-[11px] h-[43px]">
              COVID-19 DEMOGRAPHICS and
              <br />
              SOURCE of EXPOSURE
            </PageHead>
            <Demographics />
            <PageHead className="mt-[12px] h-[43px]">
              STATE HOSPITALIZATIONS
              <br />
              and DEATHS
            </PageHead>
            <Hospitals />
            <PageHead className="mt-[8px] h-[30px]" titleClass="pt-[3px]">
              NORTH DAKOTA COUNTY
              <br />
              ANALYSIS
            </PageHead>
          </div>
          <div className="mt-[11px] flex pr-[38px] pl-[18px]">
            <div className="mt-[27px] flex w-[79px] shrink-0 flex-col gap-2">
              <button className="h-4 rounded-[3px] border border-[#8c3a26] bg-[#d24625] text-[4px] whitespace-nowrap text-[#2a0d06] shadow-[0_0_3px_#bbb]">PRESS FOR ACTIVE POSITIVES</button>
              {["PRESS FOR DAILY POSITIVES", "PRESS FOR CUMULATIVE POSITIVES", "PRESS FOR CUMULATIVE DEATHS", "PRESS FOR ACTIVE PER 10K"].map((t) => (
                <button key={t} className="h-4 rounded-[3px] border border-[#a9a9a9] bg-white text-[4px] whitespace-nowrap text-[#222] shadow-[0_0_3px_#bbb]">
                  {t}
                </button>
              ))}
            </div>
            <div className="ml-[22px] min-w-0 flex-1">
              <CountyMap />
            </div>
          </div>
        </section>

        <div className="mt-[1044px] mr-[32px] ml-[32px] flex h-[25px] items-center justify-between border-t border-[#c8c8c8] bg-[#eaeaea] px-[8px] font-[Roboto,sans-serif] text-[9px] font-medium text-black">
          Microsoft Power BI
          <span className="flex items-center gap-4">
            <svg viewBox="0 0 12 12" className="w-[11px]" fill="none" stroke="#111" aria-hidden="true">
              <path d="M3 3H1v8h8V9M3.5 8c0-3 1.500-4 4-4V2l4 3.500-4 3V6.500c-2 0-3 .2-4 1.500z" />
            </svg>
            <svg viewBox="0 0 12 12" className="w-[11px]" fill="none" stroke="#111" aria-hidden="true">
              <path d="M1 11 11 1M7 1h4v4M1 7v4h4" />
            </svg>
          </span>
        </div>

        <div className="px-[32px]">
          <h3 className="mt-[30px] text-[12px] font-bold text-[#0f1c33]">Serology Testing</h3>
          <p className="mt-[7px] font-['Liberation_Sans',sans-serif] text-[9px] leading-[18px] italic">
            Reported serology tests are completed in a laboratory and do not include point of care serology tests. Individuals
            <br />
            who complete an antibody and a PCR test maybe be counted in totals for both.
          </p>
          <table className="mt-[6px] w-[338px] table-fixed border-collapse border border-black">
            <tbody>
              <tr className="h-[17px]">
                <td className="w-[112px] border border-[#777] p-0">Detected</td>
                <td className="w-[163px] border border-[#777] p-0">Not Detected</td>
                <td className="border border-[#777] p-0">Total</td>
              </tr>
              <tr className="h-[17px]">
                <td className="border border-[#777] p-0">348</td>
                <td className="border border-[#777] p-0">8330</td>
                <td className="border border-[#777] p-0">8678</td>
              </tr>
            </tbody>
          </table>
        </div>

        <h2 className="mt-[44px] ml-[22px] text-[18px] leading-[24px] text-[#0f1c33]">Deaths</h2>
        <div className="mt-[4px] px-[32px]">
          <table className="w-full border-collapse border border-[#ddd] leading-[15px]">
            <thead>
              <tr className="border-b-2 border-[#ddd] text-left text-[#0f1c33]">
                <th className="border-r border-[#ddd] py-[5px] pl-[6px]">Cause</th>
                <th className="w-[42px] px-[5px] py-[5px]">Cases</th>
              </tr>
            </thead>
            <tbody>
              {CAUSES.map(([text, n], i) => (
                <tr key={i} className="border-b border-[#ddd] align-top">
                  <td className="border-r border-[#ddd] py-[5px] pl-[6px]">{text}</td>
                  <td className="px-[5px] py-[5px]">{n}</td>
                </tr>
              ))}
            </tbody>
          </table>
        </div>

        <div className="mt-[34px] flex flex-col gap-5 px-[32px]">
          {ACCORDIONS.map((t) => (
            <button key={t} className="flex h-[45px] items-center justify-between rounded-[3px] border border-b-2 border-[#ddd] bg-[#f5f5f5] px-[17px] text-left text-[11px] font-bold text-[#333]">
              {t}
              <FaPlus size={10} color="#1b75b0" />
            </button>
          ))}
        </div>
      </main>

      <footer className="mt-[22px] bg-[#796e65] px-[24px] pt-[22px] text-[9px] text-white">
        <div className="grid grid-cols-[170px_165px_minmax(0,1fr)]">
          <div>
            Copyright © 2019 <a href="#" className="underline">North Dakota<br />Department of Health</a>
            <br />
            600 East Boulevard Ave Bismarck,
            <br />
            ND 58505-0200
            <br />
            Phone: 701-328-2372
            <br />
            <a href="#" className="underline">Contact Us</a>
            <p className="mt-[30px]">
              <a href="#" className="underline">Intranet</a>
            </p>
          </div>
          <div className="flex flex-col">
            <span className="flex gap-[8px]"><a href="#">Accessibility</a><span>|</span><a href="#">Contact</a></span>
            <span className="flex gap-[8px]"><span>|</span><a href="#">Disclaimer</a><span>|</span><a href="#">Privacy Policy</a></span>
            <span className="flex gap-[8px]"><span>|</span><a href="#">Security Policy</a></span>
          </div>
          <div>
            <Logo white className="mt-[1px] ml-[17px] w-[131px]" />
            <div className="mt-[10px] flex items-center gap-[9px]">
              <a href="#" aria-label="Email"><FaEnvelope size={17} /></a>
              <a href="#" aria-label="Facebook"><FaFacebookSquare size={17} /></a>
              <a href="#" aria-label="Twitter"><FaTwitterSquare size={17} /></a>
              <a href="#" aria-label="YouTube"><FaYoutubeSquare size={17} /></a>
            </div>
          </div>
        </div>
        <button className="relative top-[16px] -ml-[17px] h-[22px] w-[86px] rounded-t-[5px] bg-[#d24625] text-[10px] font-bold">Feedback (+)</button>
      </footer>
      <div className="h-[16px]" />
    </div>
  );
}
